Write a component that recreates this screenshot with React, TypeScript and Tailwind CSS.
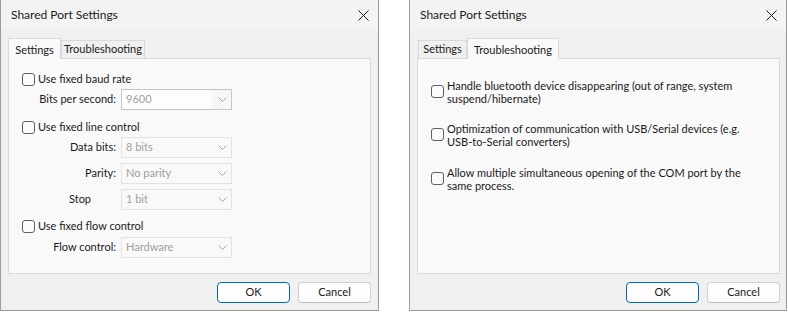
import type { ReactNode } from 'react'

const FONT = "font-['Lato','Liberation_Sans',sans-serif]"

function CloseIcon() {
  return (
    <svg width="11" height="11" viewBox="0 0 11 11" className="block">
      <path d="M0.5 0.5 L10.5 10.5 M10.5 0.5 L0.5 10.5" stroke="#1a1a1a" strokeWidth="1" />
    </svg>
  )
}

function Chevron() {
  return (
    <svg width="9" height="5" viewBox="0 0 9 5" className="block">
      <polyline points="0.5,0.5 4.5,4.5 8.5,0.5" fill="none" stroke="#a6a6a6" strokeWidth="1" />
    </svg>
  )
}

function CheckBox() {
  return <div className="h-[13px] w-[13px] shrink-0 rounded-[3px] border border-[#5f5f5f] bg-[#fbfbfb]" />
}

function CheckRow({ label }: { label: string }) {
  return (
    <div className="flex h-[14px] items-center pl-[13px]">
      <CheckBox />
      <span className="ml-[3px] text-[#1a1a1a]">{label}</span>
    </div>
  )
}

function Combo({ value, editable = false }: { value: string; editable?: boolean }) {
  return (
    <div
      className={
        editable
          ? 'flex h-[21px] w-[111px] items-center justify-between border border-[#c6c6c6] bg-[#f7f7f7] pr-[4px]'
          : 'flex h-[21px] w-[111px] items-center justify-between border border-[#e2e2e2] bg-[#f9f9f9] pr-[4px]'
      }
    >
      <span className={editable ? 'flex h-full w-[90px] items-center bg-[#fdfdfd] pl-[4px] text-[#a0a0a0]' : 'pl-[4px] text-[#a0a0a0]'}>
        {value}
      </span>
      <Chevron />
    </div>
  )
}

function ComboRow({ label, value, editable, leftLabel, mt }: { label: string; value: string; editable?: boolean; leftLabel?: boolean; mt: string }) {
  return (
    <div className={`flex items-center pl-[13px] ${mt}`}>
      <div className={leftLabel ? 'w-[94px] pl-[47px] text-[#1a1a1a]' : 'w-[94px] text-right text-[#1a1a1a]'}>{label}</div>
      <div className="ml-[5px]">
        <Combo value={value} editable={editable} />
      </div>
    </div>
  )
}

function Tab({ label, active, width }: { label: string; active: boolean; width: string }) {
  return active ? (
    <div className={`relative z-10 -mb-px flex h-[21px] items-start justify-center border border-b-0 border-[#d9d9d9] bg-[#f9f9f9] pt-[3px] text-[#1a1a1a] ${width}`}>
      {label}
    </div>
  ) : (
    <div className={`flex h-[18px] items-center justify-center border border-b-0 border-[#d9d9d9] bg-[#f0f0f0] text-[#1a1a1a] ${width}`}>
      {label}
    </div>
  )
}

function Dialog({ width, activeTab, children }: { width: string; activeTab: 0 | 1; children: ReactNode }) {
  return (
    <div className={`flex h-[311px] flex-col border border-t-0 border-[#9c9c9c] bg-[#f0f0f0] ${width}`}>
      <div className="flex h-[30px] shrink-0 items-center justify-between bg-[#f3f3f3] pl-[10px] pr-[9px]">
        <span className="text-[12px] text-[#1a1a1a]">Shared Port Settings</span>
        <CloseIcon />
      </div>
      <div className="flex flex-col px-[7px] pt-[8px]">
        <div className="flex h-[20px] items-end">
          {activeTab === 0 ? (
            <>
              <Tab label="Settings" active width="w-[53px]" />
              <Tab label="Troubleshooting" active={false} width="w-[84px]" />
            </>
          ) : (
            <>
              <div className="ml-px" />
              <Tab label="Settings" active={false} width="w-[49px]" />
              <Tab label="Troubleshooting" active width="w-[92px]" />
            </>
          )}
        </div>
        <div className="h-[216px] w-[363px] border border-[#d9d9d9] bg-[#f9f9f9]">{children}</div>
        <div className="mt-[8px] flex w-[363px] justify-end gap-[8px]">
          <button className="h-[21px] w-[73px] rounded-[4px] border border-[#0067c0] bg-[#fdfdfd] text-[#1a1a1a]">OK</button>
          <button className="h-[21px] w-[73px] rounded-[4px] border border-[#d0d0d0] border-b-[#bdbdbd] bg-[#fdfdfd] text-[#1a1a1a]">Cancel</button>
        </div>
      </div>
    </div>
  )
}

function Option({ lines, mt }: { lines: string[]; mt: string }) {
  return (
    <div className={`flex items-center pl-[13px] ${mt}`}>
      <div className="-mt-[2px]">
        <CheckBox />
      </div>
      <div className="ml-[3px] whitespace-nowrap leading-[13px] text-[#1a1a1a]">
        {lines.map((l) => (
          <div key={l}>{l}</div>
        ))}
      </div>
    </div>
  )
}

export default function App() {
  return (
    <div className={`flex h-[312px] w-[788px] bg-white text-[11px] ${FONT}`}>
      <Dialog width="w-[379px]" activeTab={0}>
        <div className="flex flex-col">
          <div className="mt-[13px]">
            <CheckRow label="Use fixed baud rate" />
          </div>
          <ComboRow label="Bits per second:" value="9600" editable mt="mt-[3px]" />
          <div className="mt-[10px]">
            <CheckRow label="Use fixed line control" />
          </div>
          <ComboRow label="Data bits:" value="8 bits" mt="mt-[3px]" />
          <ComboRow label="Parity:" value="No parity" mt="mt-[5px]" />
          <ComboRow label="Stop" value="1 bit" leftLabel mt="mt-[5px]" />
          <div className="mt-[9px]">
            <CheckRow label="Use fixed flow control" />
          </div>
          <ComboRow label="Flow control:" value="Hardware" mt="mt-[4px]" />
        </div>
      </Dialog>
      <div className="ml-[30px]">
        <Dialog width="w-[378px]" activeTab={1}>
          <div className="flex flex-col">
            <Option mt="mt-[20px]" lines={['Handle bluetooth device disappearing (out of range, system', 'suspend/hibernate)']} />
            <Option mt="mt-[17px]" lines={['Optimization of communication with USB/Serial devices (e.g.', 'USB-to-Serial converters)']} />
            <Option mt="mt-[18px]" lines={['Allow multiple simultaneous opening of the COM port by the', 'same process.']} />
          </div>
        </Dialog>
      </div>
    </div>
  )
}
